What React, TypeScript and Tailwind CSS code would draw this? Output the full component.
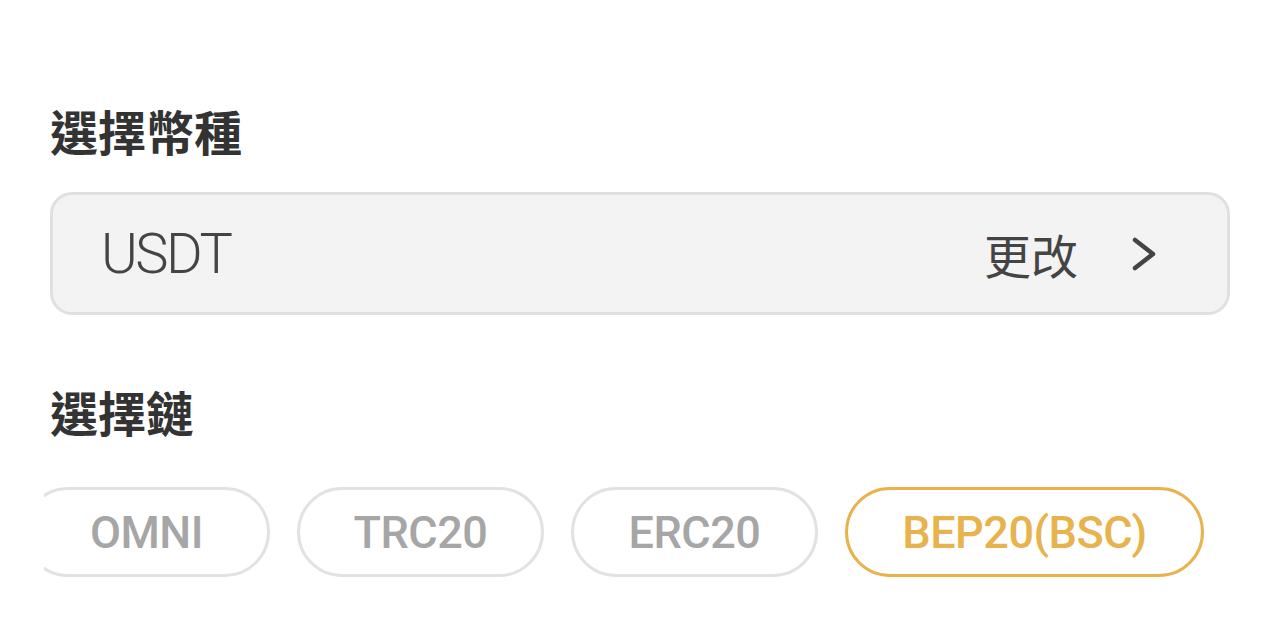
import { useState } from "react";

const CHAINS = ["OMNI", "TRC20", "ERC20", "BEP20(BSC)"];

const cjk = "font-['Noto_Sans_CJK_TC','Noto_Sans',sans-serif]";

export default function App() {
    const [chain, setChain] = useState("BEP20(BSC)");

    return (
        <div className="w-full min-h-[617px] bg-white px-[50px] pt-[102px]">
            <h2 className={`${cjk} text-[48px] leading-[56px] font-bold text-[#333]`}>選擇幣種</h2>

            <button
                type="button"
                className="mt-[34px] w-full h-[123px] flex items-center justify-between rounded-[22px] border-[3px] border-[#e0e0e0] bg-[#f3f3f3] pl-[50px] pr-[70px]"
            >
                <span className="-ml-[2px] font-['Roboto',sans-serif] text-[56px] font-light tracking-[-2.5px] text-[#444] leading-none">
                    USDT
                </span>
                <span className="flex items-center gap-[53px]">
                    <span className={`${cjk} text-[47px] text-[#444] leading-none`}>更改</span>
                    <svg width="26" height="36" viewBox="0 0 26 36" fill="none">
                        <path
                            d="M4 4 L22 18 L4 32"
                            stroke="#444"
                            strokeWidth="4.5"
                            strokeLinecap="round"
                            strokeLinejoin="round"
                        />
                    </svg>
                </span>
            </button>

            <h2 className={`mt-[68px] ${cjk} text-[48px] leading-[56px] font-bold text-[#333]`}>選擇鏈</h2>

            <div className="mt-[48px] -ml-[6px] overflow-hidden">
                <div className="flex gap-[27px] -ml-[21px]">
                    {CHAINS.map((c) => {
                        const active = c === chain;
                        return (
                            <button
                                key={c}
                                type="button"
                                onClick={() => setChain(c)}
                                className={`shrink-0 h-[90px] rounded-full border-[3px] flex items-center justify-center font-['Roboto',sans-serif] text-[45px] font-medium tracking-[-0.5px] leading-none ${
                                    c === "BEP20(BSC)" ? "w-[359px]" : "w-[247px]"
                                } ${
                                    active
                                        ? "border-[#e8b24c] text-[#e8b24c]"
                                        : "border-[#e2e2e2] text-[#a6a6a6]"
                                }`}
                            >
                                {c}
                            </button>
                        );
                    })}
                </div>
            </div>
        </div>
    );
}
